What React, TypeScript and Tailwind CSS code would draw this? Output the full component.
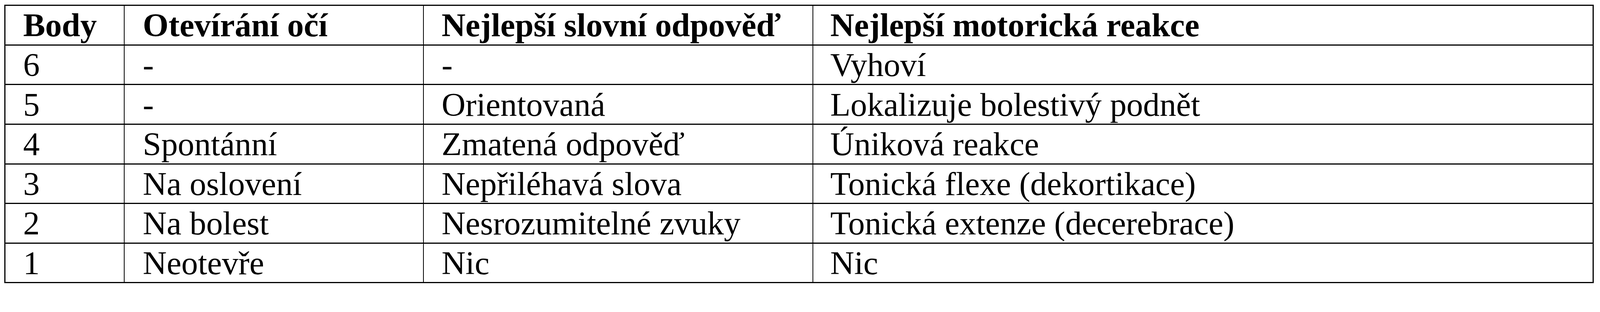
import React from 'react';

const header = ['Body', 'Otevírání očí', 'Nejlepší slovní odpověď', 'Nejlepší motorická reakce'];

const rows: string[][] = [
  ['6', '-', '-', 'Vyhoví'],
  ['5', '-', 'Orientovaná', 'Lokalizuje bolestivý podnět'],
  ['4', 'Spontánní', 'Zmatená odpověď', 'Úniková reakce'],
  ['3', 'Na oslovení', 'Nepřiléhavá slova', 'Tonická flexe (dekortikace)'],
  ['2', 'Na bolest', 'Nesrozumitelné zvuky', 'Tonická extenze (decerebrace)'],
  ['1', 'Neotevře', 'Nic', 'Nic'],
];

// column widths incl. right border
const cellClass = [
  'w-[305.2px] border-r-[2.85px] pl-[45px]',
  'w-[765.9px] border-r-[2.85px] pl-[46px]',
  'w-[996.7px] border-r-[2.85px] pl-[45px]',
  'w-[1998px] border-r-[3.8px] pl-[43.5px]',
];

function Row({ cells, bold }: { cells: string[]; bold?: boolean }) {
  return (
    <div className="flex border-b-[3.8px] border-black">
      {cells.map((text, i) => (
        <div
          key={i}
          className={`${cellClass[i]} h-[98.6px] shrink-0 border-black pt-[7.2px] text-[84.8px] leading-[84.8px] whitespace-nowrap text-black ${
            bold ? 'font-bold' : 'font-normal'
          }`}
        >
          {text}
        </div>
      ))}
    </div>
  );
}

export default function App() {
  return (
    <div
      className="w-full min-h-screen bg-white pt-[12.2px] pl-[11.3px]"
      style={{ fontFamily: '"Liberation Serif", "Times New Roman", serif' }}
    >
      <div className="w-fit border-l-[3.8px] border-t-[3.8px] border-black">
        <Row cells={header} bold />
        {rows.map((r) => (
          <Row key={r[0]} cells={r} />
        ))}
      </div>
    </div>
  );
}
